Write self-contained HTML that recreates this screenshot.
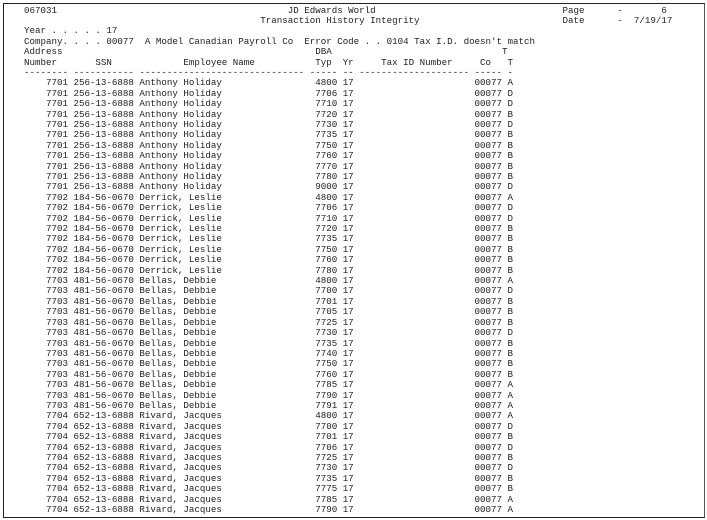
<!DOCTYPE html>
<html><head><meta charset="utf-8"><style>
html,body{margin:0;padding:0;background:#fff;width:707px;height:520px;overflow:hidden}
.box{position:absolute;left:3px;top:3px;width:700px;height:513px;border-left:1.5px solid #222;border-top:1.5px solid #222;border-bottom:1.5px solid #222;border-right:1px solid #555}
pre{position:absolute;left:24px;top:5.5px;margin:0;font-family:"Liberation Mono",monospace;font-size:9.17px;line-height:10.4px;color:#222;white-space:pre}
</style></head><body>
<div class="box"></div>
<pre>067031                                          JD Edwards World                                  Page      -       6
                                           Transaction History Integrity                          Date      -  7/19/17
Year . . . . . 17
Company. . . . 00077  A Model Canadian Payroll Co  Error Code . . 0104 Tax I.D. doesn't match
Address                                              DBA                               T
Number       SSN             Employee Name           Typ  Yr     Tax ID Number     Co   T
-------- ----------- ------------------------------ ----- -- -------------------- ----- -
    7701 256-13-6888 Anthony Holiday                 4800 17                      00077 A
    7701 256-13-6888 Anthony Holiday                 7706 17                      00077 D
    7701 256-13-6888 Anthony Holiday                 7710 17                      00077 D
    7701 256-13-6888 Anthony Holiday                 7720 17                      00077 B
    7701 256-13-6888 Anthony Holiday                 7730 17                      00077 D
    7701 256-13-6888 Anthony Holiday                 7735 17                      00077 B
    7701 256-13-6888 Anthony Holiday                 7750 17                      00077 B
    7701 256-13-6888 Anthony Holiday                 7760 17                      00077 B
    7701 256-13-6888 Anthony Holiday                 7770 17                      00077 B
    7701 256-13-6888 Anthony Holiday                 7780 17                      00077 B
    7701 256-13-6888 Anthony Holiday                 9000 17                      00077 D
    7702 184-56-0670 Derrick, Leslie                 4800 17                      00077 A
    7702 184-56-0670 Derrick, Leslie                 7706 17                      00077 D
    7702 184-56-0670 Derrick, Leslie                 7710 17                      00077 D
    7702 184-56-0670 Derrick, Leslie                 7720 17                      00077 B
    7702 184-56-0670 Derrick, Leslie                 7735 17                      00077 B
    7702 184-56-0670 Derrick, Leslie                 7750 17                      00077 B
    7702 184-56-0670 Derrick, Leslie                 7760 17                      00077 B
    7702 184-56-0670 Derrick, Leslie                 7780 17                      00077 B
    7703 481-56-0670 Bellas, Debbie                  4800 17                      00077 A
    7703 481-56-0670 Bellas, Debbie                  7700 17                      00077 D
    7703 481-56-0670 Bellas, Debbie                  7701 17                      00077 B
    7703 481-56-0670 Bellas, Debbie                  7705 17                      00077 B
    7703 481-56-0670 Bellas, Debbie                  7725 17                      00077 B
    7703 481-56-0670 Bellas, Debbie                  7730 17                      00077 D
    7703 481-56-0670 Bellas, Debbie                  7735 17                      00077 B
    7703 481-56-0670 Bellas, Debbie                  7740 17                      00077 B
    7703 481-56-0670 Bellas, Debbie                  7750 17                      00077 B
    7703 481-56-0670 Bellas, Debbie                  7760 17                      00077 B
    7703 481-56-0670 Bellas, Debbie                  7785 17                      00077 A
    7703 481-56-0670 Bellas, Debbie                  7790 17                      00077 A
    7703 481-56-0670 Bellas, Debbie                  7791 17                      00077 A
    7704 652-13-6888 Rivard, Jacques                 4800 17                      00077 A
    7704 652-13-6888 Rivard, Jacques                 7700 17                      00077 D
    7704 652-13-6888 Rivard, Jacques                 7701 17                      00077 B
    7704 652-13-6888 Rivard, Jacques                 7706 17                      00077 D
    7704 652-13-6888 Rivard, Jacques                 7725 17                      00077 B
    7704 652-13-6888 Rivard, Jacques                 7730 17                      00077 D
    7704 652-13-6888 Rivard, Jacques                 7735 17                      00077 B
    7704 652-13-6888 Rivard, Jacques                 7775 17                      00077 B
    7704 652-13-6888 Rivard, Jacques                 7785 17                      00077 A
    7704 652-13-6888 Rivard, Jacques                 7790 17                      00077 A</pre>
</body></html>
